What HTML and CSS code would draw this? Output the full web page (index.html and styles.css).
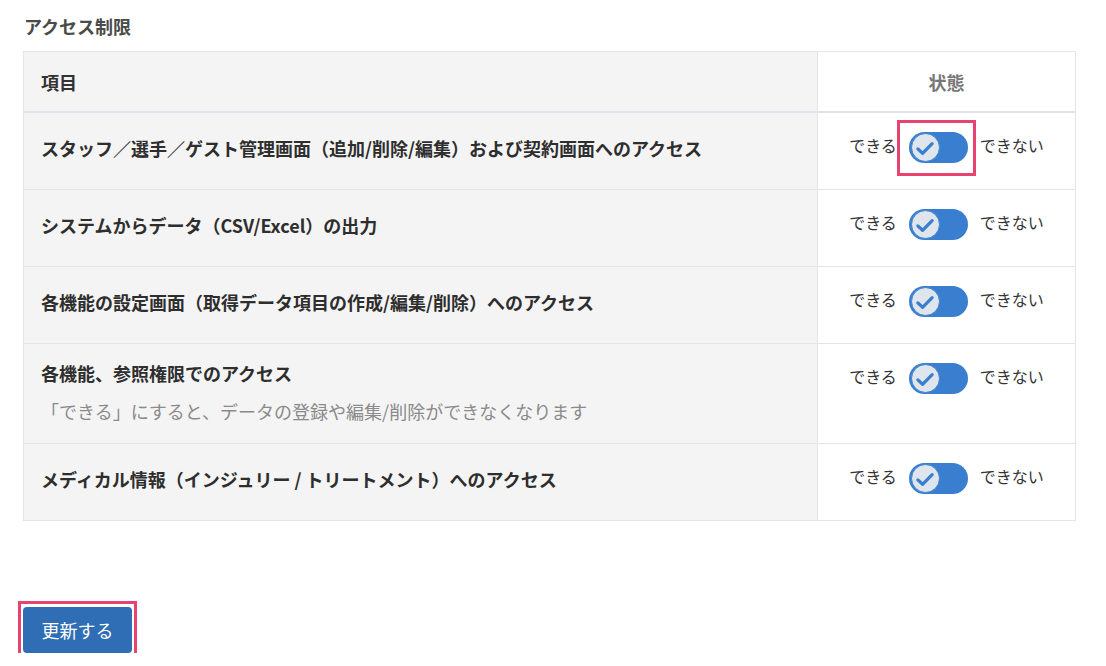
FILE: index.html
```html
<!DOCTYPE html>
<html lang="ja">
<head>
<meta charset="utf-8">
<link rel="stylesheet" href="styles.css">
</head>
<body>
<div class="page">
  <h2 class="title">アクセス制限</h2>
  <table class="perm">
    <thead>
      <tr><th class="col-item">項目</th><th class="col-state">状態</th></tr>
    </thead>
    <tbody>
      <tr>
        <td class="item">スタッフ／選手／ゲスト管理画面（追加/削除/編集）および契約画面へのアクセス</td>
        <td class="state"><div class="sw"><span>できる</span><span class="hl"><span class="toggle"><span class="knob"><svg viewBox="0 0 20 20" width="22" height="22"><path d="M3.5 10.8 L7.8 14.8 L16.5 6" fill="none" stroke="#3a7fcf" stroke-width="2.9" stroke-linecap="round" stroke-linejoin="round"/></svg></span></span></span><span>できない</span></div></td>
      </tr>
      <tr>
        <td class="item">システムからデータ（CSV/Excel）の出力</td>
        <td class="state"><div class="sw"><span>できる</span><span class="toggle"><span class="knob"><svg viewBox="0 0 20 20" width="22" height="22"><path d="M3.5 10.8 L7.8 14.8 L16.5 6" fill="none" stroke="#3a7fcf" stroke-width="2.9" stroke-linecap="round" stroke-linejoin="round"/></svg></span></span><span>できない</span></div></td>
      </tr>
      <tr>
        <td class="item">各機能の設定画面（取得データ項目の作成/編集/削除）へのアクセス</td>
        <td class="state"><div class="sw"><span>できる</span><span class="toggle"><span class="knob"><svg viewBox="0 0 20 20" width="22" height="22"><path d="M3.5 10.8 L7.8 14.8 L16.5 6" fill="none" stroke="#3a7fcf" stroke-width="2.9" stroke-linecap="round" stroke-linejoin="round"/></svg></span></span><span>できない</span></div></td>
      </tr>
      <tr>
        <td class="item tall">各機能、参照権限でのアクセス<div class="note">「できる」にすると、データの登録や編集/削除ができなくなります</div></td>
        <td class="state"><div class="sw"><span>できる</span><span class="toggle"><span class="knob"><svg viewBox="0 0 20 20" width="22" height="22"><path d="M3.5 10.8 L7.8 14.8 L16.5 6" fill="none" stroke="#3a7fcf" stroke-width="2.9" stroke-linecap="round" stroke-linejoin="round"/></svg></span></span><span>できない</span></div></td>
      </tr>
      <tr>
        <td class="item">メディカル情報（インジュリー / トリートメント）へのアクセス</td>
        <td class="state"><div class="sw"><span>できる</span><span class="toggle"><span class="knob"><svg viewBox="0 0 20 20" width="22" height="22"><path d="M3.5 10.8 L7.8 14.8 L16.5 6" fill="none" stroke="#3a7fcf" stroke-width="2.9" stroke-linecap="round" stroke-linejoin="round"/></svg></span></span><span>できない</span></div></td>
      </tr>
    </tbody>
  </table>
  <div class="actions">
    <span class="hl-btn"><button class="btn">更新する</button></span>
  </div>
</div>
</body>
</html>
```
FILE: styles.css
```css
html, body {
  margin: 0;
  padding: 0;
  background: #fff;
}
body {
  font-family: "Noto Sans CJK JP", "Noto Sans", "Liberation Sans", sans-serif;
  color: #333;
  font-size: 18px;
}
.page {
  padding: 13px 30px 0 23px;
}
.title {
  margin: 0 0 12px 1px;
  font-size: 18px;
  font-weight: 700;
  line-height: 26px;
  color: #4a4a4a;
}
.perm {
  width: 1053px;
  border-collapse: collapse;
  table-layout: fixed;
}
.perm th, .perm td {
  border: 1px solid #e3e5e8;
  padding: 0;
}
.perm thead th {
  height: 59px;
  border-bottom: 2px solid #e0e3e7;
  font-weight: 700;
  font-size: 18px;
  line-height: 26px;
}
.col-item {
  text-align: left;
  background: #f4f4f4;
  padding-left: 17px !important;
  color: #333;
}
.col-state {
  width: 257px;
  text-align: center;
  color: #777;
  background: #fff;
}
.item {
  background: #f4f4f4;
  padding: 0 17px 5px !important;
  height: 71px;
  font-weight: 700;
  line-height: 27px;
  vertical-align: middle;
  color: #2e2e2e;
}
.item.tall {
  height: 97px;
  padding-bottom: 2px !important;
}
.note {
  margin-top: 11px;
  font-weight: 400;
  color: #8a8a8a;
}
.state {
  vertical-align: top;
  background: #fff;
}
.sw {
  display: flex;
  justify-content: center;
  align-items: center;
  gap: 12px;
  padding-top: 19px;
  font-size: 16px;
  line-height: 24px;
  color: #333;
}
.sw > span:first-child,
.sw > span:last-child {
  margin-top: -6px;
}
.toggle {
  display: flex;
  align-items: center;
  width: 59px;
  height: 31px;
  border-radius: 16px;
  background: #3a7fcf;
  box-sizing: border-box;
  padding: 1px 2px;
}
.knob {
  width: 29px;
  height: 29px;
  border-radius: 50%;
  background: #dfe5ec;
  display: flex;
  align-items: center;
  justify-content: center;
  box-sizing: border-box;
  border: 1px solid #3a7fcf;
}
.knob svg {
  display: block;
}
.hl {
  display: flex;
  position: relative;
}
.hl::after {
  content: "";
  position: absolute;
  left: -12px;
  top: -12px;
  right: -8px;
  bottom: -13px;
  border: 3px solid #e8426e;
}
.actions {
  padding-top: 86px;
}
.hl-btn {
  display: inline-block;
  position: relative;
}
.hl-btn::after {
  content: "";
  position: absolute;
  left: -5px;
  top: -6px;
  right: -5px;
  bottom: -5px;
  border: 3px solid #e8426e;
}
.btn {
  display: block;
  width: 109px;
  height: 46px;
  border: 0;
  border-radius: 4px;
  background: #2f6db4;
  color: #fff;
  font-family: inherit;
  font-size: 18px;
  padding: 0;
}
```
